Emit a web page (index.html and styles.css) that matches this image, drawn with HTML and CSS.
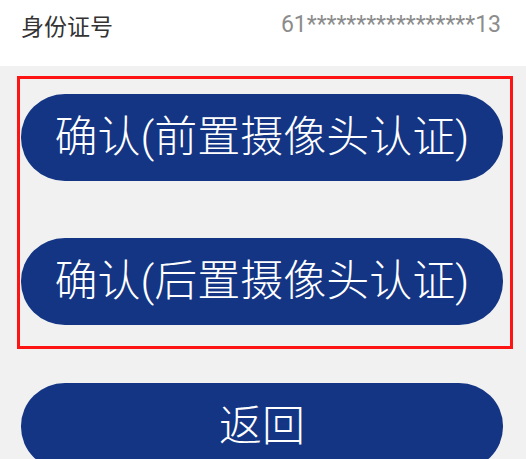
FILE: index.html
```html
<!DOCTYPE html>
<html lang="zh-CN">
<head>
<meta charset="utf-8">
<title>身份认证</title>
<link rel="stylesheet" href="styles.css">
</head>
<body>
<div class="page">
  <div class="info-row">
    <span class="label">身份证号</span>
    <span class="value">61*****************13</span>
  </div>
  <div class="content">
    <div class="highlight">
      <button class="btn">确认(前置摄像头认证)</button>
      <button class="btn">确认(后置摄像头认证)</button>
    </div>
    <button class="btn btn-back">返回</button>
  </div>
</div>
</body>
</html>
```
FILE: styles.css
```css
html, body {
  margin: 0;
  padding: 0;
}
body {
  width: 526px;
  height: 459px;
  overflow: hidden;
  background: #f1f1f1;
  font-family: Roboto, "Noto Sans CJK SC", sans-serif;
}
.page {
  display: flex;
  flex-direction: column;
}
.info-row {
  background: #ffffff;
  height: 66px;
  box-sizing: border-box;
  padding: 8px 25px 0 21px;
  display: flex;
  justify-content: space-between;
  align-items: flex-start;
}
.label {
  font-family: "Noto Sans CJK SC", sans-serif;
  font-size: 23px;
  line-height: 34px;
  color: #333333;
}
.value {
  font-family: Roboto, sans-serif;
  font-size: 23px;
  line-height: 34px;
  color: #8c8c8c;
}
.content {
  display: flex;
  flex-direction: column;
  padding: 10px 0 0 17px;
}
.highlight {
  width: 496px;
  box-sizing: border-box;
  border: 3px solid #ff1414;
  padding: 15px 7px 21px 1px;
  display: flex;
  flex-direction: column;
  gap: 57px;
}
.btn {
  display: block;
  width: 482px;
  height: 87px;
  border: none;
  border-radius: 44px / 43px;
  background: #133584;
  color: #ffffff;
  font-family: Roboto, "Noto Sans CJK SC", sans-serif;
  font-size: 43px;
  font-weight: 300;
  line-height: 87px;
  padding: 0;
  text-align: center;
  margin: 0;
}
.btn-back {
  margin: 34px 0 0 4px;
}
```
